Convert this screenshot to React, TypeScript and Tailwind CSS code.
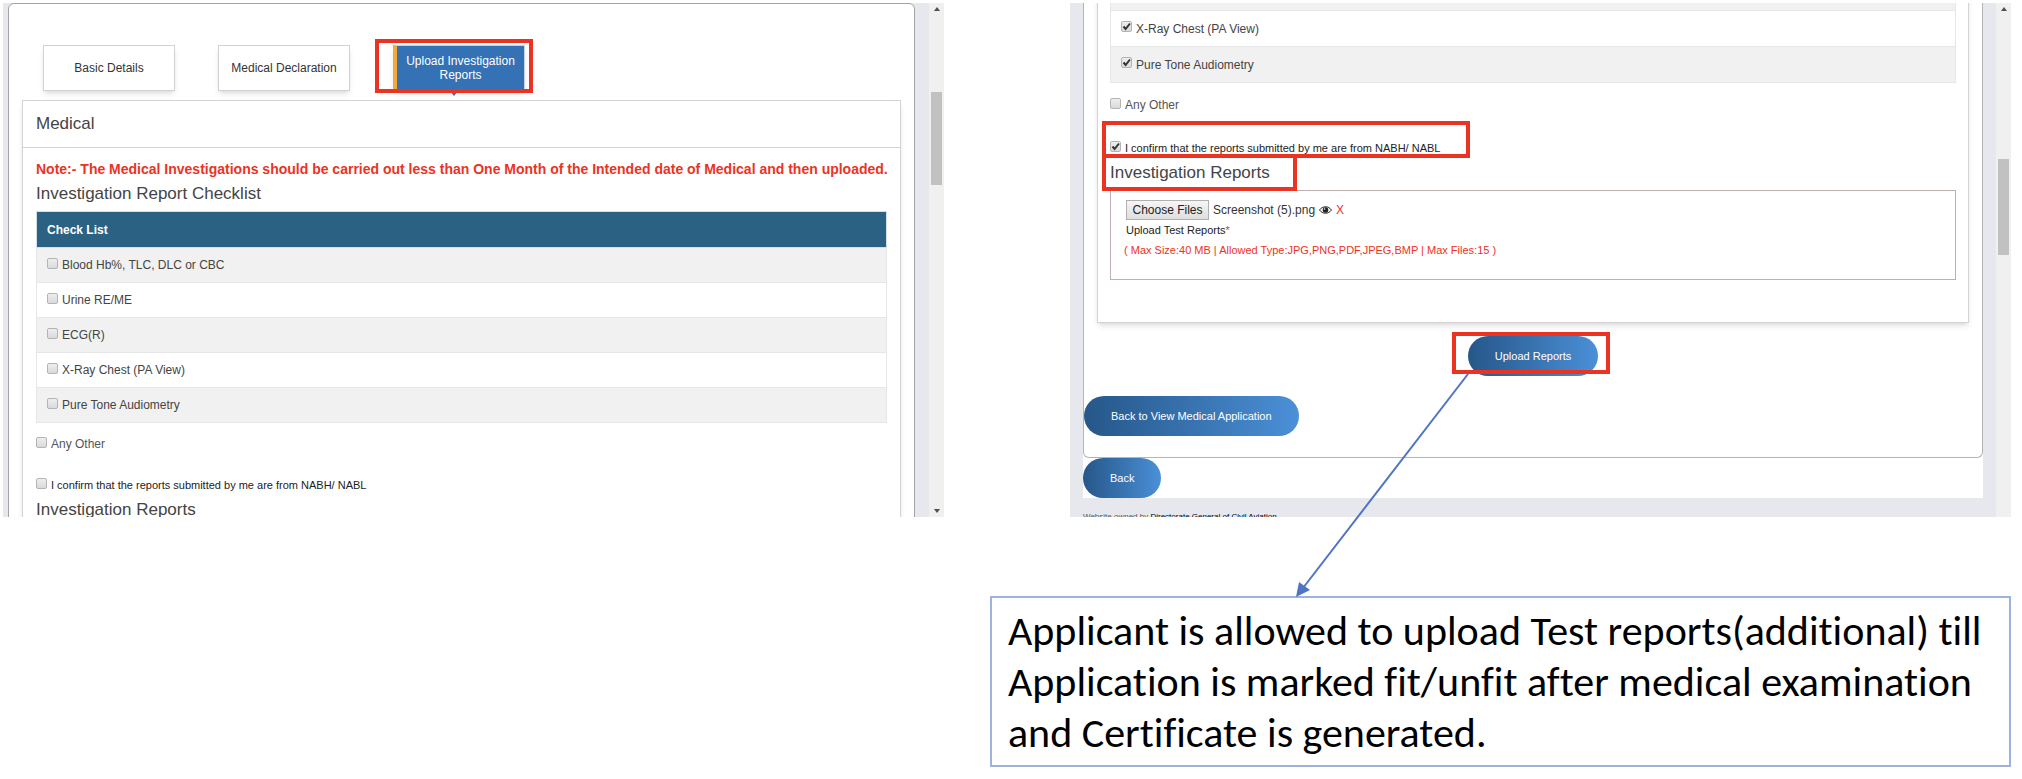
import { useRef } from "react";
import type { ReactNode } from "react";

const checklist = [
  "Blood Hb%, TLC, DLC or CBC",
  "Urine RE/ME",
  "ECG(R)",
  "X-Ray Chest (PA View)",
  "Pure Tone Audiometry",
];

function Highlight({ className }: { className: string }) {
  return (
    <span
      aria-hidden="true"
      className={`pointer-events-none absolute z-10 border-4 border-[#eb3324] ${className}`}
    />
  );
}

function Check({
  id,
  label,
  checked = false,
  className = "text-xs text-[#444]",
}: {
  id: string;
  label: string;
  checked?: boolean;
  className?: string;
}) {
  return (
    <div className="flex h-5 items-center gap-1">
      <span className="relative -mt-1 block size-[11px]">
        <input
          id={id}
          type="checkbox"
          defaultChecked={checked}
          className="peer block size-[11px] appearance-none rounded-xs border border-[#b4b4b4] bg-linear-to-b from-[#eeeeee] to-[#dadada]"
        />
        <svg
          viewBox="0 0 11 11"
          className="pointer-events-none absolute inset-0 hidden size-[11px] peer-checked:block"
        >
          <path d="M2.5 5.5 4.6 8 9 2.5" fill="none" stroke="#333" strokeWidth="2" />
        </svg>
      </span>
      <label htmlFor={id} className={`whitespace-nowrap ${className}`}>
        {label}
      </label>
    </div>
  );
}

function ScrollBar({ thumb, down = false }: { thumb: string; down?: boolean }) {
  return (
    <div aria-hidden="true" className="flex w-[15px] shrink-0 flex-col items-center bg-[#f0f0f0] py-1">
      <svg viewBox="0 0 6 4" className="h-1 w-1.5 shrink-0">
        <path d="M0 4 3 0 6 4Z" fill="#505050" />
      </svg>
      <div className={`w-[11px] shrink-0 bg-[#c1c1c1] ${thumb}`} />
      {down && (
        <svg viewBox="0 0 6 4" className="mt-auto h-1 w-1.5 shrink-0">
          <path d="M0 0 3 4 6 0Z" fill="#505050" />
        </svg>
      )}
    </div>
  );
}

function Pane({ children, bar }: { children: ReactNode; bar: ReactNode }) {
  return (
    <div className="flex h-[514px] overflow-hidden bg-[#e7e8ee]">
      <div className="min-w-0 flex-1">{children}</div>
      {bar}
    </div>
  );
}

function Tab({ children, active = false }: { children: ReactNode; active?: boolean }) {
  return (
    <button
      type="button"
      className={
        active
          ? "h-[46px] w-[132px] border border-l-4 border-[#c9d3de] border-l-[#f0a93a] bg-[#3471b5] text-xs leading-[14px] text-white shadow-md"
          : "h-[46px] w-[132px] border border-[#d2d2d2] bg-white text-xs text-[#333] shadow-md"
      }
    >
      {children}
    </button>
  );
}

function Pill({ children }: { children: ReactNode }) {
  return (
    <button
      type="button"
      className="block h-10 rounded-full bg-linear-to-r from-[#265789] to-[#4b90d8] px-[27px] text-[11px] whitespace-nowrap text-white"
    >
      {children}
    </button>
  );
}

function CheckRows({
  items,
  prefix,
  checked = false,
  rowClass,
}: {
  items: string[];
  prefix: string;
  checked?: boolean;
  rowClass: string;
}) {
  return (
    <tbody>
      {items.map((item) => (
        <tr key={item} className="odd:bg-[#f1f1f1] even:bg-white">
          <td className={`border border-[#e6e6e6] px-2.5 ${rowClass}`}>
            <Check id={`${prefix}-${item}`} label={item} checked={checked} />
          </td>
        </tr>
      ))}
    </tbody>
  );
}

function ChecklistPane() {
  return (
    <Pane bar={<ScrollBar thumb="mt-[81px] h-[93px]" down />}>
      <div className="mr-[14px] ml-[5px] rounded-t-md border border-[#a3a3a3] bg-white px-[13px] pt-[41px] pb-10">
        <nav className="flex gap-[43px] pl-[21px]">
          <Tab>Basic Details</Tab>
          <Tab>Medical Declaration</Tab>
          <div className="relative">
            <Tab active>
              Upload Investigation
              <br />
              Reports
            </Tab>
            <svg viewBox="0 0 8 5" className="absolute top-full left-[57px] h-[5px] w-2">
              <path d="M0 0H8L4 5Z" fill="#3471b5" />
            </svg>
            <Highlight className="-top-1.5 -left-[18px] h-[54px] w-[158px]" />
          </div>
        </nav>
        <section className="mt-[9px] border border-[#d4d4d4] shadow-md">
          <h2 className="flex h-[47px] items-center border-b border-[#d4d4d4] px-[13px] text-[17px] text-[#444]">
            Medical
          </h2>
          <div className="px-[13px] pt-[11px] pb-10">
            <p className="text-sm leading-5 font-bold whitespace-nowrap text-[#eb3324]">
              Note:- The Medical Investigations should be carried out less than One Month of the
              Intended date of Medical and then uploaded.
            </p>
            <h3 className="mb-0.5 text-[17px] leading-[30px] text-[#444]">
              Investigation Report Checklist
            </h3>
            <table className="w-full border-collapse">
              <thead>
                <tr>
                  <th className="h-9 border border-[#d5e0e6] bg-[#2b6183] px-2.5 text-left text-xs font-bold text-white">
                    Check List
                  </th>
                </tr>
              </thead>
              <CheckRows items={checklist} prefix="left" rowClass="h-[35px]" />
            </table>
            <div className="mt-[11px]">
              <Check id="left-other" label="Any Other" className="text-xs text-[#555]" />
            </div>
            <div className="mt-[21px]">
              <Check
                id="left-confirm"
                label="I confirm that the reports submitted by me are from NABH/ NABL"
                className="text-[11px] text-[#222]"
              />
            </div>
            <h3 className="text-[17px] leading-[30px] text-[#444]">Investigation Reports</h3>
          </div>
        </section>
      </div>
    </Pane>
  );
}

function UploadPane() {
  const fileInput = useRef<HTMLInputElement>(null);
  return (
    <Pane bar={<ScrollBar thumb="mt-[148px] h-24" />}>
      <div className="mx-[13px] bg-white">
        <div className="rounded-b-md border border-t-0 border-[#b4b4b4] pb-[21px]">
          <section className="mx-[13px] border border-t-0 border-[#d4d4d4] px-3 pb-[42px] shadow-md">
            <table className="-mt-[29px] w-full border-collapse">
              <CheckRows items={checklist.slice(2)} prefix="right" checked rowClass="h-9" />
            </table>
            <div className="mt-3">
              <Check id="right-other" label="Any Other" className="text-xs text-[#555]" />
            </div>
            <div className="relative mt-[23px]">
              <Check
                id="right-confirm"
                label="I confirm that the reports submitted by me are from NABH/ NABL"
                checked
                className="text-[11px] text-[#222]"
              />
              <Highlight className="-top-[17px] -left-2 h-[37px] w-[368px]" />
            </div>
            <div className="relative">
              <h3 className="text-[17px] leading-[30px] text-[#444]">Investigation Reports</h3>
              <Highlight className="-top-1 -left-2 h-[37px] w-[195px]" />
            </div>
            <div className="mt-0.5 h-[90px] border border-[#bfb0b0] px-[13px] pt-[9px]">
              <div className="ml-0.5 flex items-center gap-1 text-xs text-[#333]">
                <button
                  type="button"
                  onClick={() => fileInput.current?.click()}
                  className="h-5 w-[83px] border border-[#b0b0b0] bg-linear-to-b from-[#f6f6f6] to-[#dedede] whitespace-nowrap text-[#222]"
                >
                  Choose Files
                </button>
                <input ref={fileInput} id="reports" type="file" multiple className="hidden" />
                <span className="whitespace-nowrap">Screenshot (5).png</span>
                <svg viewBox="0 0 13 8" className="h-2 w-[13px]">
                  <path d="M.5 4C3.5-.3 9.500-.3 12.500 4 9.500 8.300 3.500 8.300.5 4Z" fill="#fff" stroke="#222" />
                  <circle cx="6.500" cy="4" r="2.800" fill="#222" />
                  <circle cx="5.600" cy="3" r=".7" fill="#fff" />
                </svg>
                <button type="button" aria-label="Remove file" className="text-[#eb3324]">
                  X
                </button>
              </div>
              <label htmlFor="reports" className="ml-0.5 block text-[11px] leading-5 text-[#222]">
                Upload Test Reports<span className="text-[#eb3324]">*</span>
              </label>
              <p className="text-[11px] leading-5 whitespace-nowrap text-[#eb3324]">
                ( Max Size:40 MB | Allowed Type:JPG,PNG,PDF,JPEG,BMP | Max Files:15 )
              </p>
            </div>
          </section>
          <div className="mt-[13px] flex justify-center">
            <div className="relative">
              <Pill>Upload Reports</Pill>
              <Highlight className="-top-1 -left-4 h-[42px] w-[158px]" />
            </div>
          </div>
          <div className="mt-5">
            <Pill>Back to View Medical Application</Pill>
          </div>
        </div>
        <Pill>Back</Pill>
      </div>
      <footer className="ml-[13px] pt-[13px] text-[8px] leading-3 whitespace-nowrap text-[#555]">
        Website owned by <span className="text-black">Directorate General of Civil Aviation</span>
      </footer>
    </Pane>
  );
}

export default function App() {
  return (
    <main className="bg-white pt-[3px] pr-[11px] pb-3 pl-[3px] font-['Liberation_Sans',Arial,sans-serif]">
      <div className="grid grid-cols-2 gap-x-[126px]">
        <ChecklistPane />
        <div className="relative">
          <UploadPane />
          <svg
            viewBox="0 0 180 226"
            className="pointer-events-none absolute top-[369px] left-[222px] z-20 h-[226px] w-[180px]"
          >
            <path d="M176 2 11 216" fill="none" stroke="#4f74c4" strokeWidth="2" />
            <path d="M4 225 7 210 18 218Z" fill="#4f74c4" />
          </svg>
        </div>
      </div>
      <p className="mt-[79px] ml-auto w-full max-w-[1021px] border-2 border-[#9fb2de] px-4 py-[7px] font-['Carlito','Lato',sans-serif] text-[42px] leading-[51px] text-black [font-variant-ligatures:none]">
        Applicant is allowed to upload Test reports(additional) till Application is marked fit/unfit
        after medical examination and Certificate is generated.
      </p>
    </main>
  );
}
